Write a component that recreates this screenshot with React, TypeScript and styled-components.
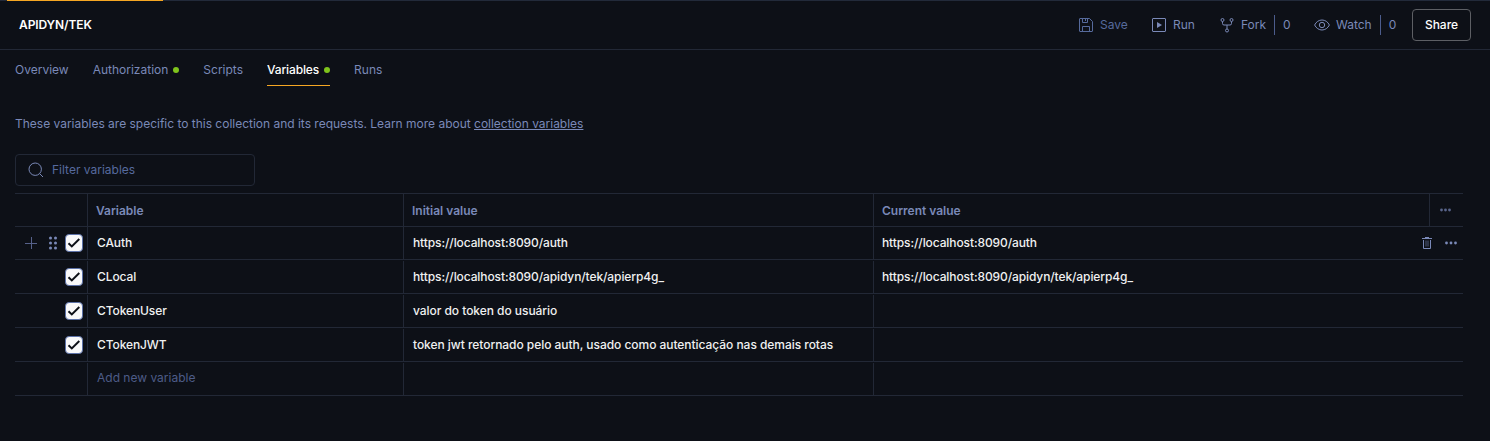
import React from "react";
import styled, { createGlobalStyle } from "styled-components";

const GlobalStyle = createGlobalStyle`
  *, *::before, *::after { box-sizing: border-box; }
  body { margin: 0; background: #0d1017; }
`;

const line = "#222836";
const muted = "#7a89b8";
const dim = "#566a9c";

const Page = styled.div`
  height: 441px;
  overflow: hidden;
  background: #0d1017;
  color: ${muted};
  font: 400 12px/16px Inter, "Liberation Sans", sans-serif;
  white-space: nowrap;
`;

const TabStrip = styled.div`
  height: 1px;
  padding-left: 7px;
  background: #222a3a;
`;

const ActiveStrip = styled.div`
  width: 156px;
  height: 1px;
  background: #f5a623;
`;

const Header = styled.header`
  display: flex;
  align-items: center;
  justify-content: space-between;
  height: 49px;
  padding: 0 19px;
  border-bottom: 1px solid ${line};
`;

const Title = styled.h1`
  margin: 0;
  color: #fff;
  font-size: 12px;
  font-weight: 600;
  letter-spacing: -0.1px;
`;

const Actions = styled.div`
  display: flex;
  align-items: center;
`;

const Action = styled.div<{ $width: number; $faded?: boolean }>`
  display: flex;
  align-items: center;
  gap: 6px;
  width: ${(p) => p.$width}px;
  color: ${(p) => (p.$faded ? dim : muted)};
  svg { flex: none; }
`;

const Count = styled.span`
  height: 20px;
  margin-left: 2px;
  padding-left: 8px;
  border-left: 1px solid #4c5c8c;
  line-height: 20px;
`;

const ShareButton = styled.button`
  width: 59px;
  height: 32px;
  padding: 0;
  border: 1px solid #5d5f64;
  border-radius: 4px;
  background: none;
  color: #fff;
  font: 500 12px/16px Inter, sans-serif;
`;

const Tabs = styled.nav`
  display: flex;
  gap: 24px;
  height: 36px;
  padding-left: 15px;
`;

const Tab = styled.div<{ $active?: boolean }>`
  display: flex;
  align-items: center;
  gap: 5px;
  height: 36px;
  padding-top: 4px;
  border-bottom: 1px solid ${(p) => (p.$active ? "#f5a623" : "transparent")};
  color: ${(p) => (p.$active ? "#fff" : muted)};
  font-weight: ${(p) => (p.$active ? 500 : 400)};
  letter-spacing: ${(p) => (p.$active ? "-0.13px" : "0")};
`;

const Dot = styled.i`
  width: 6px;
  height: 6px;
  border-radius: 50%;
  background: #7fc41c;
`;

const Content = styled.main`
  padding: 30px 27px 0 15px;
`;

const Intro = styled.p`
  margin: 0 0 22px;
  letter-spacing: -0.01px;
`;

const DocLink = styled.a`
  text-decoration: underline;
  text-underline-offset: 1px;
`;

const Filter = styled.div`
  display: flex;
  align-items: center;
  gap: 8px;
  width: 240px;
  height: 32px;
  margin-bottom: 7px;
  padding-left: 12px;
  border: 1px solid ${line};
  border-radius: 4px;
  color: #566a9e;
`;

const Table = styled.div`
  border-top: 1px solid ${line};
`;

const Row = styled.div<{ $height: number; $split?: boolean }>`
  display: grid;
  grid-template-columns: 72px 316px 470px 1fr;
  height: ${(p) => p.$height}px;
  padding-top: ${(p) => (p.$split ? 1 : 0)}px;
  border-bottom: 1px solid ${line};
`;

const Controls = styled.div`
  display: flex;
  align-items: center;
  justify-content: flex-end;
  padding-right: 4px;
`;

const BaseCell = styled.div`
  display: flex;
  align-items: center;
  padding-left: 9px;
  border-left: 1px solid ${line};
`;

const HeadCell = styled(BaseCell)`
  padding-left: 8px;
  font-weight: 600;
`;

const HeadLabel = styled.span`
  padding-top: 2px;
`;

const ValueCell = styled(BaseCell)<{ $spacing?: number; $last?: boolean }>`
  padding-left: ${(p) => (p.$last ? 8 : 9)}px;
  color: #f0f0f1;
  font-weight: 500;
  letter-spacing: ${(p) => p.$spacing ?? -0.1}px;
`;

const HintCell = styled(BaseCell)`
  padding-bottom: 2px;
  color: #4d5c88;
`;

const RowActions = styled.div`
  display: flex;
  align-items: center;
  gap: 13px;
  margin-left: auto;
  padding-right: 6px;
  color: ${muted};
`;

const MoreCell = styled.div`
  display: flex;
  align-items: center;
  align-self: stretch;
  width: 34px;
  margin-left: auto;
  padding-left: 10px;
  border-left: 1px solid ${line};
  color: #59658b;
`;

const Checkbox = styled.span`
  display: flex;
  align-items: center;
  justify-content: center;
  width: 18px;
  height: 18px;
  border: 1px solid #5d72a8;
  border-radius: 4px;
  background: #f9f9fa;
`;

const Handle = styled.div`
  display: flex;
  align-items: center;
  gap: 12px;
  margin-right: 8px;
`;

const SaveIcon = () => (
  <svg width="16" height="16" viewBox="0 0 16 16" fill="none" stroke="currentColor">
    <path d="M2 1.5h9.5l3 3V14a.5.5 0 0 1-.5.5H2a.5.5 0 0 1-.5-.5V2a.5.5 0 0 1 .5-.5zM4.500 1.500v4h5v-4M7.500 2v2M4.500 14.500v-5h7v5" />
  </svg>
);

const RunIcon = () => (
  <svg width="16" height="16" viewBox="0 0 16 16" fill="none" stroke="currentColor">
    <rect x="1.500" y="1.500" width="13" height="13" rx=".5" />
    <path d="M6 5l5 3-5 3z" fill="currentColor" stroke="none" />
  </svg>
);

const ForkIcon = () => (
  <svg width="16" height="16" viewBox="0 0 16 16" fill="none" stroke="currentColor">
    <circle cx="3.500" cy="3" r="1.500" />
    <circle cx="12.500" cy="3" r="1.500" />
    <circle cx="8" cy="13.500" r="1.500" />
    <path d="M3.500 4.500v2a1.500 1.500 0 0 0 1.500 1.500h6a1.500 1.500 0 0 0 1.500-1.500v-2M8 8v4" />
  </svg>
);

const EyeIcon = () => (
  <svg width="16" height="16" viewBox="0 0 16 16" fill="none" stroke="currentColor">
    <path d="M.6 8C2.200 4.800 4.900 3 8 3s5.800 1.800 7.400 5c-1.600 3.200-4.300 5-7.400 5S2.200 11.200.6 8z" />
    <circle cx="8" cy="8" r="2.700" />
  </svg>
);

const SearchIcon = () => (
  <svg width="16" height="16" viewBox="0 0 16 16" fill="none" stroke={muted}>
    <circle cx="7.200" cy="7.200" r="6.200" />
    <path d="M11.700 11.700L15 15" />
  </svg>
);

const CheckIcon = () => (
  <svg width="14" height="12" viewBox="0 0 14 12" fill="none" stroke="#0d1017" strokeWidth="2">
    <path d="M1.500 6.200l3.300 3.200L12.300 2" />
  </svg>
);

const PlusIcon = () => (
  <svg width="12" height="12" viewBox="0 0 12 12" stroke="#56618a">
    <path d="M6.500 0v12M0 6.500h12" />
  </svg>
);

const GripIcon = () => (
  <svg width="8" height="14" viewBox="0 0 8 14" fill={muted}>
    {[2, 7, 12].map((y) => (
      <React.Fragment key={y}>
        <circle cx="1.500" cy={y} r="1.500" />
        <circle cx="6.500" cy={y} r="1.500" />
      </React.Fragment>
    ))}
  </svg>
);

const TrashIcon = () => (
  <svg width="10" height="12" viewBox="0 0 10 12" fill="none" stroke="currentColor">
    <path d="M0 1.500h10M3 .5h4M1.500 3v8.500h7V3" />
    <path d="M4 3.500v6M6 3.500v6" strokeOpacity=".6" />
  </svg>
);

const MoreIcon = ({ width }: { width: number }) => (
  <svg width={width} height="4" viewBox={`0 0 ${width} 4`} fill="currentColor">
    {[1.5, width / 2, width - 1.5].map((x) => (
      <circle key={x} cx={x} cy="2" r="1.400" />
    ))}
  </svg>
);

const variables = [
  { name: "CAuth", initial: "https://localhost:8090/auth", current: "https://localhost:8090/auth" },
  {
    name: "CLocal",
    initial: "https://localhost:8090/apidyn/tek/apierp4g_",
    current: "https://localhost:8090/apidyn/tek/apierp4g_",
  },
  { name: "CTokenUser", initial: "valor do token do usuário", current: "" },
  {
    name: "CTokenJWT",
    initial: "token jwt retornado pelo auth, usado como autenticação nas demais rotas",
    current: "",
  },
];

export default function App() {
  return (
    <Page>
      <GlobalStyle />
      <TabStrip>
        <ActiveStrip />
      </TabStrip>
      <Header>
        <Title>APIDYN/TEK</Title>
        <Actions>
          <Action $width={73} $faded>
            <SaveIcon />
            Save
          </Action>
          <Action $width={68}>
            <RunIcon />
            Run
          </Action>
          <Action $width={95}>
            <ForkIcon />
            Fork<Count>0</Count>
          </Action>
          <Action $width={98}>
            <EyeIcon />
            Watch<Count>0</Count>
          </Action>
          <ShareButton>Share</ShareButton>
        </Actions>
      </Header>
      <Tabs>
        <Tab>Overview</Tab>
        <Tab>
          Authorization
          <Dot />
        </Tab>
        <Tab>Scripts</Tab>
        <Tab $active>
          Variables
          <Dot />
        </Tab>
        <Tab>Runs</Tab>
      </Tabs>
      <Content>
        <Intro>
          These variables are specific to this collection and its requests. Learn more about{" "}
          <DocLink>collection variables</DocLink>
        </Intro>
        <Filter>
          <SearchIcon />
          Filter variables
        </Filter>
        <Table>
          <Row $height={33}>
            <Controls />
            <HeadCell>
              <HeadLabel>Variable</HeadLabel>
            </HeadCell>
            <HeadCell>
              <HeadLabel>Initial value</HeadLabel>
            </HeadCell>
            <HeadCell>
              <HeadLabel>Current value</HeadLabel>
              <MoreCell>
                <MoreIcon width={11} />
              </MoreCell>
            </HeadCell>
          </Row>
          {variables.map((v, i) => (
            <Row key={v.name} $height={i === 0 ? 33 : 34} $split={i > 0}>
              <Controls>
                {i === 0 && (
                  <Handle>
                    <PlusIcon />
                    <GripIcon />
                  </Handle>
                )}
                <Checkbox>
                  <CheckIcon />
                </Checkbox>
              </Controls>
              <ValueCell>{v.name}</ValueCell>
              <ValueCell $spacing={v.initial.includes(" ") ? -0.045 : -0.1}>{v.initial}</ValueCell>
              <ValueCell $last>
                {v.current}
                {i === 0 && (
                  <RowActions>
                    <TrashIcon />
                    <MoreIcon width={12} />
                  </RowActions>
                )}
              </ValueCell>
            </Row>
          ))}
          <Row $height={34} $split>
            <Controls />
            <HintCell>Add new variable</HintCell>
            <BaseCell />
            <BaseCell />
          </Row>
        </Table>
      </Content>
    </Page>
  );
}
